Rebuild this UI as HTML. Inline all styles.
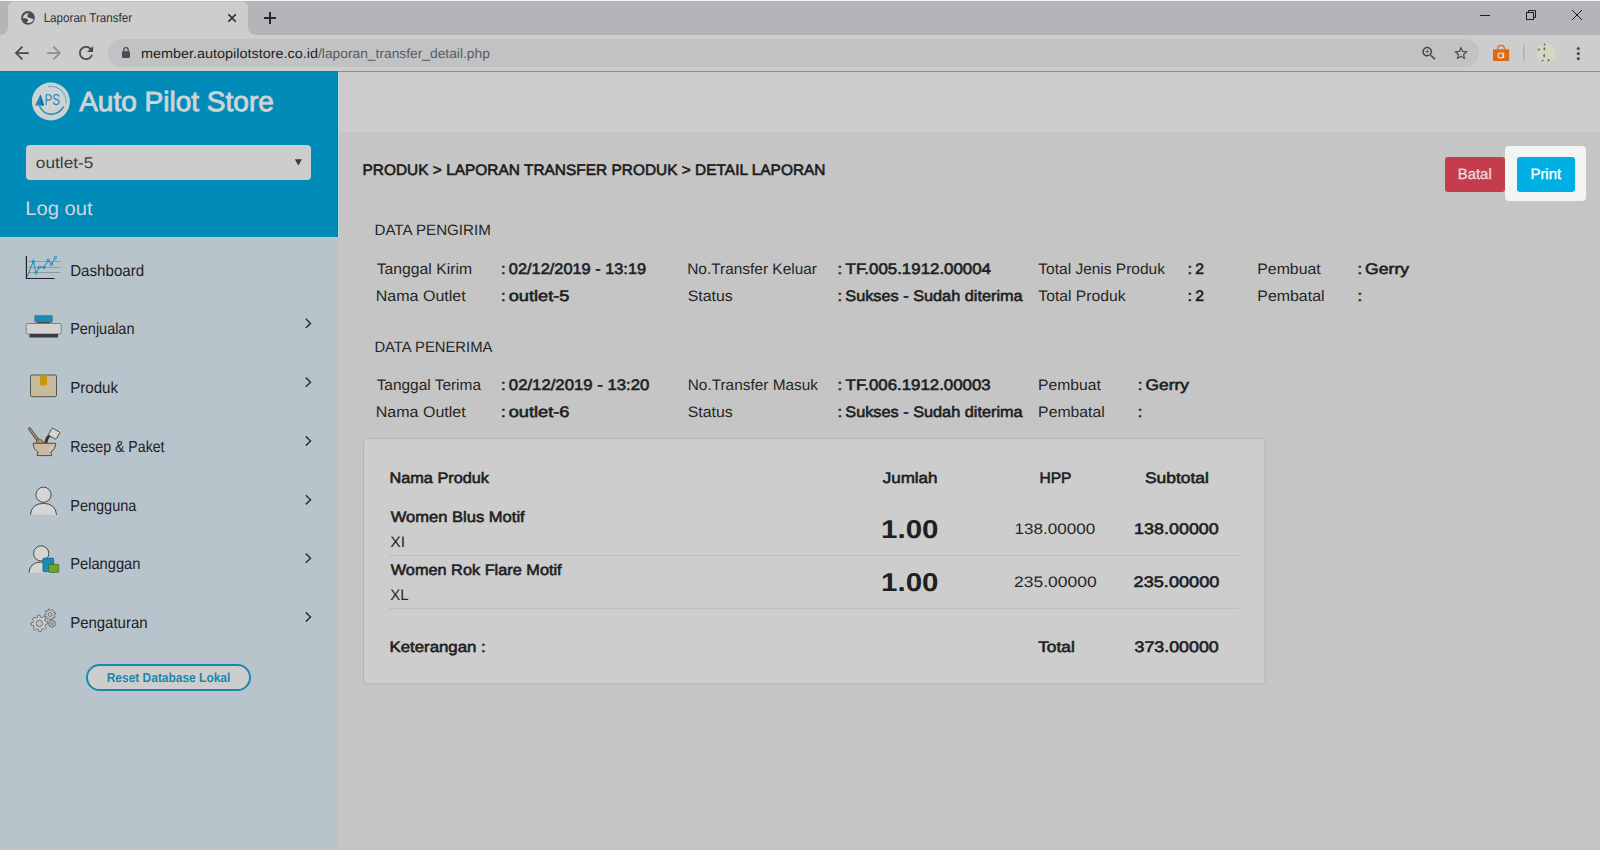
<!DOCTYPE html>
<html><head><meta charset="utf-8"><title>Laporan Transfer</title>
<style>
html,body{margin:0;padding:0;width:1601px;height:850px;overflow:hidden;background:#c5c5c5;}
svg{display:block;font-family:"Liberation Sans",sans-serif;text-rendering:geometricPrecision;}
</style></head><body>
<svg width="1601" height="850" viewBox="0 0 1601 850">
<!-- backgrounds -->
<rect x="0" y="0" width="1601" height="850" fill="#c5c5c5"/>
<rect x="0" y="0" width="1601" height="1" fill="#f6f6f6"/>
<rect x="0" y="1" width="1601" height="34" fill="#b4b5b8"/>
<!-- active tab -->
<path d="M0 35 Q7 35 8 28 L8 8 Q8 1.5 14 1.5 L242 1.5 Q248 1.5 248 8 L248 28 Q249 35 256 35 Z" fill="#cdcdcd"/>
<rect x="0" y="35" width="1601" height="36" fill="#cdcdcd"/>
<rect x="108" y="39" width="1371" height="28" rx="14" fill="#c1c2c3"/>
<rect x="338" y="71" width="1263" height="1" fill="#8e8e8e"/>
<!-- content -->
<rect x="338" y="72" width="1263" height="60" fill="#cccccc"/>
<rect x="338" y="132" width="1263" height="718" fill="#c5c5c5"/>
<!-- sidebar -->
<rect x="0" y="71" width="338" height="166" fill="#008bb9"/>
<rect x="0" y="71" width="338" height="1" fill="#167b9d"/>
<rect x="0" y="237" width="338" height="613" fill="#b8c4cc"/>
<rect x="1600" y="0" width="1" height="850" fill="#ffffff"/>
<rect x="337" y="72" width="1" height="165" fill="#0a7ca6"/>
<rect x="338" y="72" width="1" height="165" fill="#bcd6de"/>

<!-- tab icons -->
<circle cx="28" cy="17.85" r="6.95" fill="#4a4d50"/>
<path d="M23.0 18.3 C23.0 15.5 25.3 13.3 28.8 13.1 L27.3 15.6 C27.0 16.8 28.0 17.6 29.5 18.0 C31 18.4 32.5 18.6 33.5 18.9 C33.3 21 31.5 22.8 28.5 23.0 L26.6 22.7 C27.5 22.0 28.3 21.0 28.0 19.8 C27.7 18.8 26.5 18.4 25.0 18.3 Z" fill="#d3d3d3"/>
<g stroke="#232528" stroke-width="1.6" stroke-linecap="butt">
  <path d="M228.3 14.2 L235.8 21.7 M235.8 14.2 L228.3 21.7"/>
</g>
<g stroke="#232528" stroke-width="2">
  <path d="M264 18 L276 18 M270 12 L270 24"/>
</g>
<!-- window controls -->
<g stroke="#1c1c1c" stroke-width="1" fill="none">
  <path d="M1480 15.5 L1490 15.5"/>
  <rect x="1526.5" y="12.5" width="7" height="7"/>
  <path d="M1528.5 12.5 L1528.5 10.5 L1535.5 10.5 L1535.5 17.5 L1533.5 17.5"/>
  <path d="M1572 10 L1582 20 M1582 10 L1572 20"/>
</g>
<!-- nav icons -->
<path transform="translate(11.3 42.5) scale(0.875)" d="M20 11H7.83l5.59-5.59L12 4l-8 8 8 8 1.41-1.41L7.83 13H20v-2z" fill="#46494d"/>
<path transform="translate(43.6 42.5) scale(0.875)" d="M12 4l-1.41 1.41L16.17 11H4v2h12.17l-5.58 5.59L12 20l8-8z" fill="#8d8f92"/>
<path transform="translate(75.6 42.4) scale(0.875)" d="M17.65 6.35C16.2 4.9 14.21 4 12 4c-4.42 0-7.99 3.58-7.99 8s3.57 8 7.99 8c3.730 0 6.84-2.55 7.73-6h-2.08c-.82 2.33-3.04 4-5.650 4-3.31 0-6-2.69-6-6s2.69-6 6-6c1.66 0 3.140.69 4.220 1.78L13 11h7V4l-2.35 2.350z" fill="#46494d"/>
<!-- lock -->
<rect x="122" y="51.3" width="8" height="6.6" rx="0.8" fill="#4a4d51"/>
<path d="M123.8 51.5 L123.8 49.8 A2.2 2.2 0 0 1 128.2 49.8 L128.2 51.5" stroke="#4a4d51" stroke-width="1.4" fill="none"/>
<!-- zoom icon -->
<path transform="translate(1420.1 44.5) scale(0.75)" d="M15.5 14h-.79l-.28-.27C15.41 12.590 16 11.110 16 9.5 16 5.910 13.090 3 9.5 3S3 5.910 3 9.5 5.910 16 9.5 16c1.610 0 3.090-.59 4.230-1.570l.27.28v.79l5 4.990L20.490 19l-4.990-5zm-6 0C7.010 14 5 11.990 5 9.5S7.010 5 9.5 5 14 7.010 14 9.5 11.990 14 9.5 14zm2.5-4h-2v2H9v-2H7V9h2V7h1v2h2v1z" fill="#46494d"/>
<!-- star -->
<path transform="translate(1452.6 44.9) scale(0.7)" d="M22 9.24l-7.19-.62L12 2 9.19 8.63 2 9.24l5.46 4.73L5.82 21 12 17.27 18.18 21l-1.63-7.03L22 9.24zM12 15.4l-3.76 2.27 1-4.28-3.32-2.88 4.38-.38L12 6.1l1.71 4.04 4.38.38-3.32 2.88 1 4.28L12 15.4z" fill="#46494d"/>
<!-- bag -->
<path d="M1493 49.3 L1509.2 49.3 L1509.2 61 L1493 61 Z" fill="#dc6a12"/>
<path d="M1497.8 49.5 L1497.8 48.6 A3.3 3.3 0 0 1 1504.4 48.6 L1504.4 49.5" stroke="#dc6a12" stroke-width="1.3" fill="none"/>
<circle cx="1500.6" cy="55.4" r="2.5" fill="none" stroke="#f0d6c0" stroke-width="1.3"/><path d="M1503.6 52.4 L1503.6 58.3" stroke="#f0d6c0" stroke-width="1.3"/>
<rect x="1523.3" y="45" width="1" height="16" fill="#a3a4a6"/>
<circle cx="1546" cy="52.9" r="9.8" fill="#d5d6c3"/>
<g fill="#6e6a52"><ellipse cx="1544.6" cy="44.6" rx="1" ry="1"/><ellipse cx="1544.4" cy="48.8" rx="0.9" ry="1.6"/><ellipse cx="1538.8" cy="49.6" rx="1.5" ry="0.8" transform="rotate(-25 1538.8 49.6)"/><ellipse cx="1544.2" cy="55.6" rx="1" ry="1.6"/><ellipse cx="1542.6" cy="60.6" rx="1.2" ry="0.8" transform="rotate(-30 1542.6 60.6)"/><ellipse cx="1548.5" cy="60.2" rx="0.9" ry="1.3"/></g>
<g fill="#4a4d51"><circle cx="1578.3" cy="48.6" r="1.6"/><circle cx="1578.3" cy="53.6" r="1.6"/><circle cx="1578.3" cy="58.6" r="1.6"/></g>

<!-- logo -->
<circle cx="50.85" cy="101.5" r="19" fill="#cfd2d3"/>
<path d="M35 105.4 L40.5 94.3 L44 105.4 Z" fill="#1a8cb5"/>
<path d="M40.5 94.3 L41 105.4 L44 105.4 Z" fill="#0e6f92"/>
<text x="44.6" y="105.4" font-size="15.8" fill="#1a8cb5" font-family="Liberation Sans" textLength="15.4" lengthAdjust="spacingAndGlyphs">PS</text>
<path d="M39.3 105.8 Q44 115 52 114.2 Q60 113.5 63.7 106.7" stroke="#1a8cb5" stroke-width="1.4" fill="none"/>
<path d="M48.21 86.53 A15.2 15.2 0 0 1 65.90 103.62" stroke="#4d9dbf" stroke-width="1.3" stroke-dasharray="1.6 0.9" fill="none"/>

<!-- select -->
<rect x="26" y="145" width="285" height="35" rx="4" fill="#cdcdcd"/>
<path d="M294.8 159.2 L301.9 159.2 L298.35 165.6 Z" fill="#3a3a3a"/>

<!-- sidebar icons -->
<!-- dashboard -->
<g>
  <path d="M28 261.5 L60.5 261.5 M28 267.4 L60.5 267.4 M28 272.5 L60.5 272.5" stroke="#8f959a" stroke-width="0.9" fill="none"/>
  <path d="M26.4 256 L26.4 278.5 L54.5 278.5" stroke="#1e2326" stroke-width="1.2" fill="none"/>
  <path d="M26.9 277.3 L33.3 261.4 L36.1 272.8 L39.3 267.2 L44.1 267.4 L48.1 260.5 L51.5 264.4 L55.4 257.5" stroke="#1a8fbb" stroke-width="1" fill="none"/>
  <g fill="none" stroke="#1a8fbb" stroke-width="0.9"><circle cx="33.3" cy="261.4" r="1.3"/><circle cx="36.1" cy="272.8" r="1.3"/><circle cx="39.3" cy="267.2" r="1.3"/><circle cx="44.1" cy="267.4" r="1.3"/><circle cx="48.1" cy="260.5" r="1.3"/><circle cx="51.5" cy="264.4" r="1.3"/><circle cx="55.4" cy="257.5" r="1.3"/></g>
</g>
<!-- penjualan (cash register) -->
<g>
  <rect x="34.6" y="315.3" width="18" height="7" rx="1.2" fill="#1a8ab5" stroke="#7a8084" stroke-width="0.7"/>
  <rect x="37" y="322" width="13" height="1.5" fill="#444"/>
  <rect x="26.2" y="323.5" width="35" height="10.5" rx="1.2" fill="#d2d2d2" stroke="#6c6c6c" stroke-width="0.8"/>
  <rect x="29.5" y="334" width="28.5" height="3.5" fill="#3c3c3c"/>
</g>
<!-- produk box -->
<g>
  <rect x="30.5" y="375" width="26" height="21.7" rx="1.5" fill="#c9ba99" stroke="#4a4a44" stroke-width="0.9"/>
  <rect x="40" y="375.3" width="7" height="10" fill="#c8960d"/>
</g>
<!-- resep bowl -->
<g>
  <path d="M29.6 428.8 L37.5 439.5" stroke="#4a4036" stroke-width="3" stroke-linecap="round"/>
  <path d="M29.6 428.8 L37.5 439.5" stroke="#a88e70" stroke-width="1.6" stroke-linecap="round"/>
  <path d="M36 443.5 Q36.5 438.5 40 439.2 Q43 440 44.2 443.5 Z" fill="#a88e70" stroke="#4a4036" stroke-width="0.7"/>
  <path d="M45.8 443.5 Q46.5 437.5 49.8 435.5" stroke="#3a322b" stroke-width="3" fill="none"/>
  <rect x="49.6" y="429.6" width="9" height="8.2" rx="1" transform="rotate(30 54.1 433.7)" fill="#d8d3cd" stroke="#3b3b3b" stroke-width="0.8"/>
  <path d="M33.1 443.3 L55.8 443.3 Q55.5 449.5 50.8 452 L51.8 455.6 L37.1 455.6 L38.1 452 Q33.4 449.5 33.1 443.3 Z" fill="#cbb9a4" stroke="#4a4030" stroke-width="0.9"/>
  <path d="M52 446 Q51.5 449 49 450.5" stroke="#e3d8cc" stroke-width="0.9" fill="none"/>
</g>
<!-- pengguna -->
<g>
  <circle cx="43.5" cy="494.7" r="7.6" fill="#d5d5d5" stroke="#3a3a3a" stroke-width="0.9"/>
  <path d="M30.4 514.8 Q31.5 503.4 43.5 503.4 Q55.5 503.4 56.6 514.8 Z" fill="#d5d5d5"/>
  <path d="M30.4 514.8 Q31.5 503.4 43.5 503.4 Q55.5 503.4 56.6 514.8" fill="none" stroke="#3a3a3a" stroke-width="0.9"/>
</g>
<!-- pelanggan -->
<g>
  <circle cx="41.2" cy="553.4" r="7.6" fill="#d5d5d5" stroke="#3a3a3a" stroke-width="0.9"/>
  <path d="M28.9 572.6 Q30 562.1 41.2 562.1 Q52.4 562.1 53.5 572.6 Z" fill="#d5d5d5"/>
  <path d="M28.9 572.6 Q30 562.1 41.2 562.1 Q52.4 562.1 53.5 572.6" fill="none" stroke="#3a3a3a" stroke-width="0.9"/>
</g>
<rect x="42.9" y="558.1" width="10.8" height="13.6" rx="1" fill="#1a8bbb" stroke="#1d4f66" stroke-width="0.6"/>
<rect x="48.7" y="564.3" width="10.1" height="8.1" rx="0.8" fill="#6aa62a" stroke="#3a5a1a" stroke-width="0.6"/>
<!-- gears -->
<path fill-rule="evenodd" d="M54.02 615.29 L53.93 615.66 L55.25 616.70 L54.37 618.12 L52.85 617.40 L52.31 617.83 L51.99 618.03 L52.18 619.70 L50.56 620.08 L49.99 618.50 L49.31 618.42 L48.94 618.33 L47.90 619.65 L46.48 618.77 L47.20 617.25 L46.77 616.71 L46.57 616.39 L44.90 616.58 L44.52 614.96 L46.10 614.39 L46.18 613.71 L46.27 613.34 L44.95 612.30 L45.83 610.88 L47.35 611.60 L47.89 611.17 L48.21 610.97 L48.02 609.30 L49.64 608.92 L50.21 610.50 L50.89 610.58 L51.26 610.67 L52.30 609.35 L53.72 610.23 L53.00 611.75 L53.43 612.29 L53.63 612.61 L55.30 612.42 L55.68 614.04 L54.10 614.61 Z M52.10 614.50 A2.0 2.0 0 1 0 48.10 614.50 A2.0 2.0 0 1 0 52.10 614.50 Z" fill="#c9cbcc" stroke="#6a6a6a" stroke-width="0.9"/>
<path fill-rule="evenodd" d="M54.69 623.87 L54.64 624.16 L55.59 624.84 L54.97 625.97 L53.88 625.54 L53.46 625.87 L53.21 626.01 L53.27 627.18 L52.00 627.40 L51.66 626.28 L51.14 626.16 L50.87 626.05 L49.99 626.82 L49.03 625.97 L49.69 625.00 L49.46 624.52 L49.38 624.24 L48.23 624.04 L48.30 622.75 L49.46 622.67 L49.70 622.19 L49.86 621.95 L49.30 620.92 L50.36 620.17 L51.15 621.04 L51.66 620.92 L51.95 620.90 L52.41 619.82 L53.65 620.18 L53.47 621.34 L53.89 621.67 L54.08 621.88 L55.21 621.57 L55.71 622.76 L54.69 623.34 Z M53.10 623.60 A1.1 1.1 0 1 0 50.90 623.60 A1.1 1.1 0 1 0 53.10 623.60 Z" fill="#c9cbcc" stroke="#6a6a6a" stroke-width="0.9"/>
<path fill-rule="evenodd" d="M45.22 625.53 L45.00 626.06 L46.46 627.77 L44.86 629.65 L42.94 628.49 L42.01 629.02 L41.47 629.24 L41.30 631.48 L38.84 631.68 L38.31 629.50 L37.27 629.22 L36.74 629.00 L35.03 630.46 L33.15 628.86 L34.31 626.94 L33.78 626.01 L33.56 625.47 L31.32 625.30 L31.12 622.84 L33.30 622.31 L33.58 621.27 L33.80 620.74 L32.34 619.03 L33.94 617.15 L35.86 618.31 L36.79 617.78 L37.33 617.56 L37.50 615.32 L39.96 615.12 L40.49 617.30 L41.53 617.58 L42.06 617.80 L43.77 616.34 L45.65 617.94 L44.49 619.86 L45.02 620.79 L45.24 621.33 L47.48 621.50 L47.68 623.96 L45.50 624.49 Z M42.60 623.40 A3.2 3.2 0 1 0 36.20 623.40 A3.2 3.2 0 1 0 42.60 623.40 Z" fill="#c9cbcc" stroke="#6a6a6a" stroke-width="0.9"/>
<!-- chevrons -->
<g stroke="#2e3236" stroke-width="1.5" fill="none">
  <path d="M305.8 318.8 L310.5 323.4 L305.8 328"/>
  <path d="M305.8 377.6 L310.5 382.2 L305.8 386.8"/>
  <path d="M305.8 436.4 L310.5 441 L305.8 445.6"/>
  <path d="M305.8 495.2 L310.5 499.8 L305.8 504.4"/>
  <path d="M305.8 553.6 L310.5 558.2 L305.8 562.8"/>
  <path d="M305.8 612.4 L310.5 617 L305.8 621.6"/>
</g>
<!-- reset button -->
<rect x="87" y="665" width="163" height="25" rx="12.5" fill="#cdcdcd" stroke="#1a89b0" stroke-width="2"/>

<!-- buttons -->
<rect x="1445" y="157" width="60" height="35" rx="3" fill="#c43d4c"/>
<rect x="1505" y="146" width="81" height="55" rx="4" fill="#f3f4f4"/>
<rect x="1517" y="157" width="58" height="35" rx="3" fill="#00b0e4"/>

<!-- card -->
<rect x="363.5" y="438.5" width="901.5" height="245.5" rx="3.5" fill="#cdcdcd" stroke="#b5b5b5" stroke-width="1"/>
<rect x="389" y="555" width="850" height="1" fill="#bdbdbd"/>
<rect x="389" y="608" width="850" height="1" fill="#bdbdbd"/>

<g>
<text x="43.65" y="21.90" font-size="12.7" font-weight="400" fill="#2f3134" textLength="88.54" lengthAdjust="spacingAndGlyphs">Laporan Transfer</text>
<text x="141.05" y="57.90" font-size="13.5" font-weight="400" fill="#222325" textLength="176.88" lengthAdjust="spacingAndGlyphs">member.autopilotstore.co.id</text>
<text x="318.00" y="57.90" font-size="13.5" font-weight="400" fill="#5a5c5e" textLength="171.87" lengthAdjust="spacingAndGlyphs">/laporan_transfer_detail.php</text>
<text x="79.19" y="111.30" font-size="27.8" font-weight="400" fill="#cfd3d5" textLength="194.60" lengthAdjust="spacingAndGlyphs" stroke="#cfd3d5" stroke-width="0.9">Auto Pilot Store</text>
<text x="35.88" y="167.80" font-size="15.5" font-weight="400" fill="#393b3d" textLength="57.44" lengthAdjust="spacingAndGlyphs">outlet-5</text>
<text x="25.35" y="215.00" font-size="19.5" font-weight="400" fill="#d2d6d8" textLength="67.28" lengthAdjust="spacingAndGlyphs">Log out</text>
<text x="70.16" y="276.00" font-size="16" font-weight="400" fill="#1e2124" textLength="74.01" lengthAdjust="spacingAndGlyphs">Dashboard</text>
<text x="70.22" y="334.00" font-size="16" font-weight="400" fill="#1e2124" textLength="64.21" lengthAdjust="spacingAndGlyphs">Penjualan</text>
<text x="70.16" y="393.30" font-size="16" font-weight="400" fill="#1e2124" textLength="47.81" lengthAdjust="spacingAndGlyphs">Produk</text>
<text x="70.24" y="451.80" font-size="16" font-weight="400" fill="#1e2124" textLength="94.25" lengthAdjust="spacingAndGlyphs">Resep &amp; Paket</text>
<text x="70.21" y="511.00" font-size="16" font-weight="400" fill="#1e2124" textLength="66.18" lengthAdjust="spacingAndGlyphs">Pengguna</text>
<text x="70.20" y="569.40" font-size="16" font-weight="400" fill="#1e2124" textLength="70.25" lengthAdjust="spacingAndGlyphs">Pelanggan</text>
<text x="70.17" y="628.10" font-size="16" font-weight="400" fill="#1e2124" textLength="77.38" lengthAdjust="spacingAndGlyphs">Pengaturan</text>
<text x="106.71" y="681.80" font-size="13.1" font-weight="700" fill="#1a87ad" textLength="123.63" lengthAdjust="spacingAndGlyphs">Reset Database Lokal</text>
<text x="362.53" y="174.90" font-size="15.1" font-weight="400" fill="#1c1c1c" textLength="463.02" lengthAdjust="spacingAndGlyphs" stroke="#1c1c1c" stroke-width="0.6">PRODUK &gt; LAPORAN TRANSFER PRODUK &gt; DETAIL LAPORAN</text>
<text x="1457.75" y="179.00" font-size="15" font-weight="400" fill="#ead9dc" textLength="33.96" lengthAdjust="spacingAndGlyphs" stroke="#ead9dc" stroke-width="0.35">Batal</text>
<text x="1530.45" y="179.00" font-size="15" font-weight="400" fill="#ffffff" textLength="30.68" lengthAdjust="spacingAndGlyphs" stroke="#ffffff" stroke-width="0.35">Print</text>
<text x="374.46" y="235.10" font-size="15" font-weight="400" fill="#262626" textLength="116.38" lengthAdjust="spacingAndGlyphs">DATA PENGIRIM</text>
<text x="376.65" y="274.00" font-size="15.2" font-weight="400" fill="#262626" textLength="95.37" lengthAdjust="spacingAndGlyphs">Tanggal Kirim</text>
<text x="500.98" y="274.00" font-size="15.2" font-weight="400" fill="#1f1f1f" textLength="4.63" lengthAdjust="spacingAndGlyphs" stroke="#1f1f1f" stroke-width="0.6">:</text>
<text x="508.86" y="274.00" font-size="15.2" font-weight="400" fill="#1f1f1f" textLength="137.21" lengthAdjust="spacingAndGlyphs" stroke="#1f1f1f" stroke-width="0.6">02/12/2019 - 13:19</text>
<text x="375.68" y="300.80" font-size="15.2" font-weight="400" fill="#262626" textLength="90.03" lengthAdjust="spacingAndGlyphs">Nama Outlet</text>
<text x="500.98" y="300.80" font-size="15.2" font-weight="400" fill="#1f1f1f" textLength="4.63" lengthAdjust="spacingAndGlyphs" stroke="#1f1f1f" stroke-width="0.6">:</text>
<text x="508.74" y="300.80" font-size="15.2" font-weight="400" fill="#1f1f1f" textLength="60.72" lengthAdjust="spacingAndGlyphs" stroke="#1f1f1f" stroke-width="0.6">outlet-5</text>
<text x="687.24" y="274.00" font-size="15.2" font-weight="400" fill="#262626" textLength="129.71" lengthAdjust="spacingAndGlyphs">No.Transfer Keluar</text>
<text x="837.48" y="274.00" font-size="15.2" font-weight="400" fill="#1f1f1f" textLength="4.63" lengthAdjust="spacingAndGlyphs" stroke="#1f1f1f" stroke-width="0.6">:</text>
<text x="845.63" y="274.00" font-size="15.2" font-weight="400" fill="#1f1f1f" textLength="145.36" lengthAdjust="spacingAndGlyphs" stroke="#1f1f1f" stroke-width="0.6">TF.005.1912.00004</text>
<text x="687.79" y="300.80" font-size="15.2" font-weight="400" fill="#262626" textLength="44.98" lengthAdjust="spacingAndGlyphs">Status</text>
<text x="837.48" y="300.80" font-size="15.2" font-weight="400" fill="#1f1f1f" textLength="4.63" lengthAdjust="spacingAndGlyphs" stroke="#1f1f1f" stroke-width="0.6">:</text>
<text x="845.27" y="300.80" font-size="15.2" font-weight="400" fill="#1f1f1f" textLength="177.42" lengthAdjust="spacingAndGlyphs" stroke="#1f1f1f" stroke-width="0.6">Sukses - Sudah diterima</text>
<text x="1038.36" y="274.00" font-size="15.2" font-weight="400" fill="#262626" textLength="126.61" lengthAdjust="spacingAndGlyphs">Total Jenis Produk</text>
<text x="1187.58" y="274.00" font-size="15.2" font-weight="400" fill="#1f1f1f" textLength="4.63" lengthAdjust="spacingAndGlyphs" stroke="#1f1f1f" stroke-width="0.6">:</text>
<text x="1195.31" y="274.00" font-size="15.2" font-weight="400" fill="#1f1f1f" textLength="8.78" lengthAdjust="spacingAndGlyphs" stroke="#1f1f1f" stroke-width="0.6">2</text>
<text x="1038.36" y="300.80" font-size="15.2" font-weight="400" fill="#262626" textLength="87.11" lengthAdjust="spacingAndGlyphs">Total Produk</text>
<text x="1187.58" y="300.80" font-size="15.2" font-weight="400" fill="#1f1f1f" textLength="4.63" lengthAdjust="spacingAndGlyphs" stroke="#1f1f1f" stroke-width="0.6">:</text>
<text x="1195.31" y="300.80" font-size="15.2" font-weight="400" fill="#1f1f1f" textLength="8.78" lengthAdjust="spacingAndGlyphs" stroke="#1f1f1f" stroke-width="0.6">2</text>
<text x="1257.30" y="274.00" font-size="15.2" font-weight="400" fill="#262626" textLength="63.40" lengthAdjust="spacingAndGlyphs">Pembuat</text>
<text x="1357.48" y="274.00" font-size="15.2" font-weight="400" fill="#1f1f1f" textLength="4.63" lengthAdjust="spacingAndGlyphs" stroke="#1f1f1f" stroke-width="0.6">:</text>
<text x="1365.12" y="274.00" font-size="15.2" font-weight="400" fill="#1f1f1f" textLength="43.91" lengthAdjust="spacingAndGlyphs" stroke="#1f1f1f" stroke-width="0.6">Gerry</text>
<text x="1257.29" y="300.80" font-size="15.2" font-weight="400" fill="#262626" textLength="67.27" lengthAdjust="spacingAndGlyphs">Pembatal</text>
<text x="1357.48" y="300.80" font-size="15.2" font-weight="400" fill="#1f1f1f" textLength="4.63" lengthAdjust="spacingAndGlyphs" stroke="#1f1f1f" stroke-width="0.6">:</text>
<text x="374.38" y="352.00" font-size="15" font-weight="400" fill="#262626" textLength="118.05" lengthAdjust="spacingAndGlyphs">DATA PENERIMA</text>
<text x="376.66" y="390.00" font-size="15.2" font-weight="400" fill="#262626" textLength="104.33" lengthAdjust="spacingAndGlyphs">Tanggal Terima</text>
<text x="500.98" y="390.00" font-size="15.2" font-weight="400" fill="#1f1f1f" textLength="4.63" lengthAdjust="spacingAndGlyphs" stroke="#1f1f1f" stroke-width="0.6">:</text>
<text x="508.85" y="390.00" font-size="15.2" font-weight="400" fill="#1f1f1f" textLength="140.49" lengthAdjust="spacingAndGlyphs" stroke="#1f1f1f" stroke-width="0.6">02/12/2019 - 13:20</text>
<text x="375.68" y="416.80" font-size="15.2" font-weight="400" fill="#262626" textLength="90.03" lengthAdjust="spacingAndGlyphs">Nama Outlet</text>
<text x="500.98" y="416.80" font-size="15.2" font-weight="400" fill="#1f1f1f" textLength="4.63" lengthAdjust="spacingAndGlyphs" stroke="#1f1f1f" stroke-width="0.6">:</text>
<text x="508.73" y="416.80" font-size="15.2" font-weight="400" fill="#1f1f1f" textLength="60.76" lengthAdjust="spacingAndGlyphs" stroke="#1f1f1f" stroke-width="0.6">outlet-6</text>
<text x="687.74" y="390.00" font-size="15.2" font-weight="400" fill="#262626" textLength="130.24" lengthAdjust="spacingAndGlyphs">No.Transfer Masuk</text>
<text x="837.48" y="390.00" font-size="15.2" font-weight="400" fill="#1f1f1f" textLength="4.63" lengthAdjust="spacingAndGlyphs" stroke="#1f1f1f" stroke-width="0.6">:</text>
<text x="845.63" y="390.00" font-size="15.2" font-weight="400" fill="#1f1f1f" textLength="145.00" lengthAdjust="spacingAndGlyphs" stroke="#1f1f1f" stroke-width="0.6">TF.006.1912.00003</text>
<text x="687.79" y="416.80" font-size="15.2" font-weight="400" fill="#262626" textLength="44.98" lengthAdjust="spacingAndGlyphs">Status</text>
<text x="837.48" y="416.80" font-size="15.2" font-weight="400" fill="#1f1f1f" textLength="4.63" lengthAdjust="spacingAndGlyphs" stroke="#1f1f1f" stroke-width="0.6">:</text>
<text x="845.27" y="416.80" font-size="15.2" font-weight="400" fill="#1f1f1f" textLength="177.42" lengthAdjust="spacingAndGlyphs" stroke="#1f1f1f" stroke-width="0.6">Sukses - Sudah diterima</text>
<text x="1038.11" y="390.00" font-size="15.2" font-weight="400" fill="#262626" textLength="62.79" lengthAdjust="spacingAndGlyphs">Pembuat</text>
<text x="1137.88" y="390.00" font-size="15.2" font-weight="400" fill="#1f1f1f" textLength="4.63" lengthAdjust="spacingAndGlyphs" stroke="#1f1f1f" stroke-width="0.6">:</text>
<text x="1145.53" y="390.00" font-size="15.2" font-weight="400" fill="#1f1f1f" textLength="43.40" lengthAdjust="spacingAndGlyphs" stroke="#1f1f1f" stroke-width="0.6">Gerry</text>
<text x="1038.11" y="416.80" font-size="15.2" font-weight="400" fill="#262626" textLength="66.64" lengthAdjust="spacingAndGlyphs">Pembatal</text>
<text x="1137.88" y="416.80" font-size="15.2" font-weight="400" fill="#1f1f1f" textLength="4.63" lengthAdjust="spacingAndGlyphs" stroke="#1f1f1f" stroke-width="0.6">:</text>
<text x="389.47" y="482.90" font-size="15.2" font-weight="400" fill="#1f1f1f" textLength="99.50" lengthAdjust="spacingAndGlyphs" stroke="#1f1f1f" stroke-width="0.6">Nama Produk</text>
<text x="882.75" y="483.20" font-size="15.2" font-weight="400" fill="#1f1f1f" textLength="54.74" lengthAdjust="spacingAndGlyphs" stroke="#1f1f1f" stroke-width="0.6">Jumlah</text>
<text x="1039.52" y="483.20" font-size="15.2" font-weight="400" fill="#1f1f1f" textLength="31.99" lengthAdjust="spacingAndGlyphs" stroke="#1f1f1f" stroke-width="0.6">HPP</text>
<text x="1144.92" y="483.20" font-size="15.2" font-weight="400" fill="#1f1f1f" textLength="63.94" lengthAdjust="spacingAndGlyphs" stroke="#1f1f1f" stroke-width="0.6">Subtotal</text>
<text x="390.73" y="521.70" font-size="15.2" font-weight="400" fill="#1f1f1f" textLength="133.94" lengthAdjust="spacingAndGlyphs" stroke="#1f1f1f" stroke-width="0.6">Women Blus Motif</text>
<text x="390.15" y="547.00" font-size="15.2" font-weight="400" fill="#262626" textLength="14.89" lengthAdjust="spacingAndGlyphs">XI</text>
<text x="881.07" y="537.80" font-size="25.8" font-weight="700" fill="#1f1f1f" textLength="57.42" lengthAdjust="spacingAndGlyphs">1.00</text>
<text x="1014.50" y="533.80" font-size="15.2" font-weight="400" fill="#262626" textLength="80.65" lengthAdjust="spacingAndGlyphs">138.00000</text>
<text x="1134.14" y="533.80" font-size="15.2" font-weight="400" fill="#1f1f1f" textLength="84.64" lengthAdjust="spacingAndGlyphs" stroke="#1f1f1f" stroke-width="0.6">138.00000</text>
<text x="390.73" y="574.80" font-size="15.2" font-weight="400" fill="#1f1f1f" textLength="170.92" lengthAdjust="spacingAndGlyphs" stroke="#1f1f1f" stroke-width="0.6">Women Rok Flare Motif</text>
<text x="390.17" y="599.70" font-size="15.2" font-weight="400" fill="#262626" textLength="18.33" lengthAdjust="spacingAndGlyphs">XL</text>
<text x="881.07" y="590.50" font-size="25.8" font-weight="700" fill="#1f1f1f" textLength="57.42" lengthAdjust="spacingAndGlyphs">1.00</text>
<text x="1014.13" y="587.30" font-size="15.2" font-weight="400" fill="#262626" textLength="82.54" lengthAdjust="spacingAndGlyphs">235.00000</text>
<text x="1133.59" y="587.30" font-size="15.2" font-weight="400" fill="#1f1f1f" textLength="85.80" lengthAdjust="spacingAndGlyphs" stroke="#1f1f1f" stroke-width="0.6">235.00000</text>
<text x="389.42" y="651.80" font-size="15.2" font-weight="400" fill="#1f1f1f" textLength="96.41" lengthAdjust="spacingAndGlyphs" stroke="#1f1f1f" stroke-width="0.6">Keterangan :</text>
<text x="1038.22" y="651.80" font-size="15.2" font-weight="400" fill="#1f1f1f" textLength="36.53" lengthAdjust="spacingAndGlyphs" stroke="#1f1f1f" stroke-width="0.6">Total</text>
<text x="1134.52" y="651.80" font-size="15.2" font-weight="400" fill="#1f1f1f" textLength="84.26" lengthAdjust="spacingAndGlyphs" stroke="#1f1f1f" stroke-width="0.6">373.00000</text>
</g>
</svg>
</body></html>
